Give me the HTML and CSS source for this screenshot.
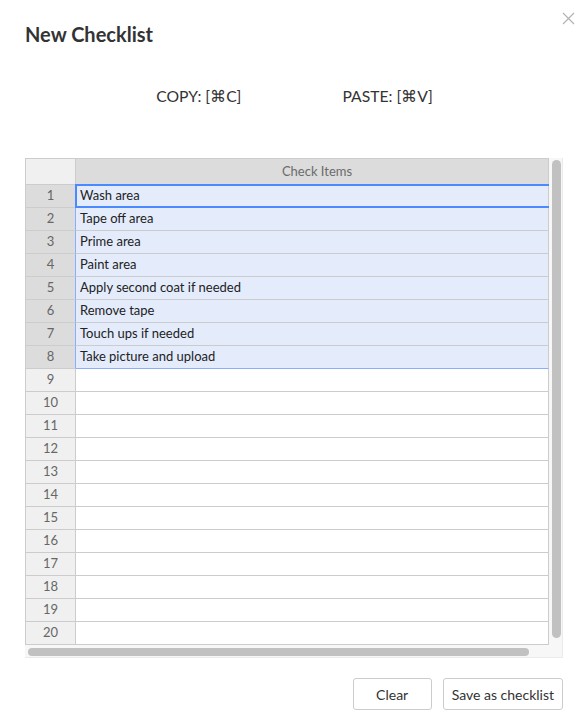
FILE: index.html
```html
<!DOCTYPE html>
<html lang="en">
<head>
    <meta charset="UTF-8">
    <meta name="viewport" content="width=device-width, initial-scale=1.0">
    <title>New Checklist</title>
    <link rel="stylesheet" href="styles.css">
</head>
<body class="page">
    <div class="modal">
        <button class="modal__close" type="button" aria-label="Close">
            <svg width="13" height="13" viewBox="0 0 13 13" fill="none" stroke="#b3b3b3" stroke-width="1.2"><path d="M1 1l11 11M12 1L1 12"/></svg>
        </button>

        <h2 class="modal__title">New Checklist</h2>

        <div class="shortcuts">
            <p class="shortcuts__item">COPY: [&#8984;C]</p>
            <p class="shortcuts__item">PASTE: [&#8984;V]</p>
        </div>

        <div class="sheet">
            <div class="sheet__table">
                <div class="sheet__row sheet__row--head">
                    <div class="cell cell--corner"></div>
                    <div class="cell cell--head">Check Items</div>
                </div>
                <div class="sheet__row sheet__row--sel">
                    <div class="cell cell--num">1</div>
                    <div class="cell cell--data cell--active">Wash area</div>
                </div>
                <div class="sheet__row sheet__row--sel">
                    <div class="cell cell--num">2</div>
                    <div class="cell cell--data">Tape off area</div>
                </div>
                <div class="sheet__row sheet__row--sel">
                    <div class="cell cell--num">3</div>
                    <div class="cell cell--data">Prime area</div>
                </div>
                <div class="sheet__row sheet__row--sel">
                    <div class="cell cell--num">4</div>
                    <div class="cell cell--data">Paint area</div>
                </div>
                <div class="sheet__row sheet__row--sel">
                    <div class="cell cell--num">5</div>
                    <div class="cell cell--data">Apply second coat if needed</div>
                </div>
                <div class="sheet__row sheet__row--sel">
                    <div class="cell cell--num">6</div>
                    <div class="cell cell--data">Remove tape</div>
                </div>
                <div class="sheet__row sheet__row--sel">
                    <div class="cell cell--num">7</div>
                    <div class="cell cell--data">Touch ups if needed</div>
                </div>
                <div class="sheet__row sheet__row--sel sheet__row--last">
                    <div class="cell cell--num">8</div>
                    <div class="cell cell--data">Take picture and upload</div>
                </div>
                <div class="sheet__row"><div class="cell cell--num">9</div><div class="cell cell--data"></div></div>
                <div class="sheet__row"><div class="cell cell--num">10</div><div class="cell cell--data"></div></div>
                <div class="sheet__row"><div class="cell cell--num">11</div><div class="cell cell--data"></div></div>
                <div class="sheet__row"><div class="cell cell--num">12</div><div class="cell cell--data"></div></div>
                <div class="sheet__row"><div class="cell cell--num">13</div><div class="cell cell--data"></div></div>
                <div class="sheet__row"><div class="cell cell--num">14</div><div class="cell cell--data"></div></div>
                <div class="sheet__row"><div class="cell cell--num">15</div><div class="cell cell--data"></div></div>
                <div class="sheet__row"><div class="cell cell--num">16</div><div class="cell cell--data"></div></div>
                <div class="sheet__row"><div class="cell cell--num">17</div><div class="cell cell--data"></div></div>
                <div class="sheet__row"><div class="cell cell--num">18</div><div class="cell cell--data"></div></div>
                <div class="sheet__row"><div class="cell cell--num">19</div><div class="cell cell--data"></div></div>
                <div class="sheet__row"><div class="cell cell--num">20</div><div class="cell cell--data"></div></div>
            </div>
            <div class="sheet__vtrack"><div class="sheet__thumb sheet__thumb--v"></div></div>
            <div class="sheet__htrack"><div class="sheet__thumb sheet__thumb--h"></div></div>
            <div class="sheet__gap"></div>
        </div>

        <div class="modal__footer">
            <button class="btn" type="button">Clear</button>
            <button class="btn" type="button">Save as checklist</button>
        </div>
    </div>
</body>
</html>
```

FILE: styles.css
```css
body{
    font-family: Lato, "Noto Sans", sans-serif;
    margin: 0;
    background: #fff;
    color: #333;
}
*, ::after, ::before {
    box-sizing: border-box;
}
p,h2{
    margin: 0;
}
.modal{
    position: relative;
    width: 577px;
    padding: 22px 14px 0 25px;
}
.modal__close{
    position: absolute;
    top: 12px;
    right: 2px;
    padding: 0;
    border: 0;
    background: none;
    width: 13px;
    height: 13px;
    display: flex;
}
.modal__title{
    font-size: 20px;
    line-height: 24px;
    font-weight: bold;
    color: #333;
}
.shortcuts{
    display: flex;
    justify-content: center;
    gap: 101px;
    margin-top: 40px;
    padding-left: 1px;
}
.shortcuts__item{
    font-size: 15.7px;
    line-height: 20px;
    color: #333;
}

/* spreadsheet */
.sheet{
    display: grid;
    grid-template-columns: 524px 1fr;
    grid-template-rows: auto 1fr;
    height: 500px;
    margin-top: 52px;
    background: #f7f7f7;
    border-right: 1px solid #ebebeb;
    border-bottom: 1px solid #ebebeb;
}
.sheet__table{
    border-top: 1px solid #ccc;
    border-left: 1px solid #ccc;
    background: #fff;
    font-size: 13px;
}
.sheet__row{
    display: grid;
    grid-template-columns: 50px 1fr;
    height: 23px;
}
.sheet__row--head{
    height: 26px;
}
.cell{
    position: relative;
    border-right: 1px solid #ccc;
    border-bottom: 1px solid #ccc;
    line-height: 20px;
    white-space: nowrap;
}
.cell--corner{
    background: #f0f0f0;
}
.cell--head{
    background: #dcdcdc;
    color: #6b6b6b;
    text-align: center;
    line-height: 25px;
    padding-left: 10px;
}
.cell--num{
    background: #f0f0f0;
    color: #666;
    text-align: center;
}
.cell--data{
    padding-left: 4px;
    color: #222;
}
.sheet__row--sel .cell--num{
    background: #dcdcdc;
    border-right-color: #89aff9;
}
.sheet__row--sel .cell--data{
    background: #e4ecfc;
}
.sheet__row--last .cell--data{
    border-bottom-color: #89aff9;
}
.cell--active::after{
    content: '';
    position: absolute;
    top: -1px;
    left: -1px;
    right: -1px;
    bottom: -1px;
    border: 2px solid #4b89ff;
    border-right: 0;
}
.sheet__vtrack{
    padding: 2px 3px 7px 3px;
}
.sheet__htrack{
    padding: 3px 0 3px 3px;
}
.sheet__thumb{
    background: #c1c1c1;
}
.sheet__thumb--v{
    height: 100%;
    width: 9px;
    border-radius: 5px;
}
.sheet__thumb--h{
    width: 501px;
    height: 8px;
    border-radius: 4px;
}

.modal__footer{
    display: flex;
    justify-content: flex-end;
    gap: 11px;
    margin-top: 20px;
}
.btn{
    font-family: Lato, "Noto Sans", sans-serif;
    font-size: 14px;
    color: #333;
    background: #fff;
    border: 1px solid #ccc;
    border-radius: 3px;
    height: 32px;
    padding: 0 8px;
}
.btn:first-child{
    width: 79px;
}
```
